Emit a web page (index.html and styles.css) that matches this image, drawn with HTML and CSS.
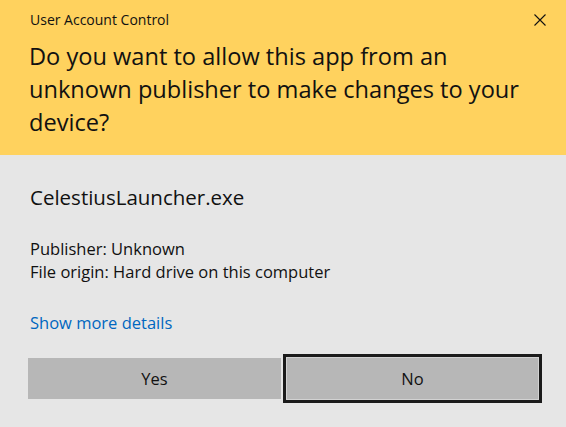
FILE: index.html
```html
<!DOCTYPE html>
<html>
<head>
<meta charset="utf-8">
<link rel="stylesheet" href="styles.css">
</head>
<body>
<div class="dialog">
  <header class="banner">
    <div class="titlebar">
      <span class="title">User Account Control</span>
      <svg class="close" width="12" height="12" viewBox="0 0 12 12"><path d="M0.5 0.5 L11.5 11.5 M11.5 0.5 L0.5 11.5" stroke="#111" stroke-width="1.1" fill="none"/></svg>
    </div>
    <h1 class="question">Do you want to allow this app from an<br>unknown publisher to make changes to your<br>device?</h1>
  </header>
  <main class="body">
    <div class="app-name">CelestiusLauncher.exe</div>
    <div class="meta">
      <div>Publisher: Unknown</div>
      <div>File origin: Hard drive on this computer</div>
    </div>
    <a class="details" href="#">Show more details</a>
    <div class="buttons">
      <button class="btn">Yes</button>
      <button class="btn focused">No</button>
    </div>
  </main>
</div>
</body>
</html>
```
FILE: styles.css
```css
html, body {
  margin: 0;
  padding: 0;
}
body {
  width: 566px;
  height: 427px;
  background: #e6e6e6;
  font-family: "Open Sans", "Noto Sans", sans-serif;
  color: #111;
  overflow: hidden;
}
.banner {
  background: #ffd25e;
  padding: 0 0 16px 30px;
}
.titlebar {
  display: flex;
  justify-content: space-between;
  align-items: center;
  height: 40px;
  padding-right: 20px;
}
.title {
  font-size: 14px;
  line-height: 20px;
  margin-top: -1px;
}
.close {
  display: block;
}
.question {
  margin: 0 0 0 -1px;
  font-weight: normal;
  font-size: 23.6px;
  line-height: 33px;
  white-space: nowrap;
}
.body {
  padding: 28px 24px 0 30px;
}
.app-name {
  font-size: 20.5px;
  line-height: 28px;
}
.meta {
  margin-top: 26px;
  font-size: 16.5px;
  line-height: 23px;
}
.details {
  display: block;
  margin-top: 28px;
  font-size: 16.5px;
  line-height: 23px;
  color: #0067c0;
  text-decoration: none;
}
.buttons {
  display: flex;
  align-items: center;
  gap: 2px;
  margin-top: 20px;
  margin-left: -2px;
}
.btn {
  width: 253px;
  height: 41px;
  border: 0;
  background: #b7b7b7;
  font-family: inherit;
  font-size: 16.5px;
  color: #111;
  padding: 0;
}
.btn.focused {
  width: 259px;
  height: 49px;
  border: 3px solid #1b1b1b;
  box-shadow: inset 0 0 0 1px #d2d2d2;
}
```
